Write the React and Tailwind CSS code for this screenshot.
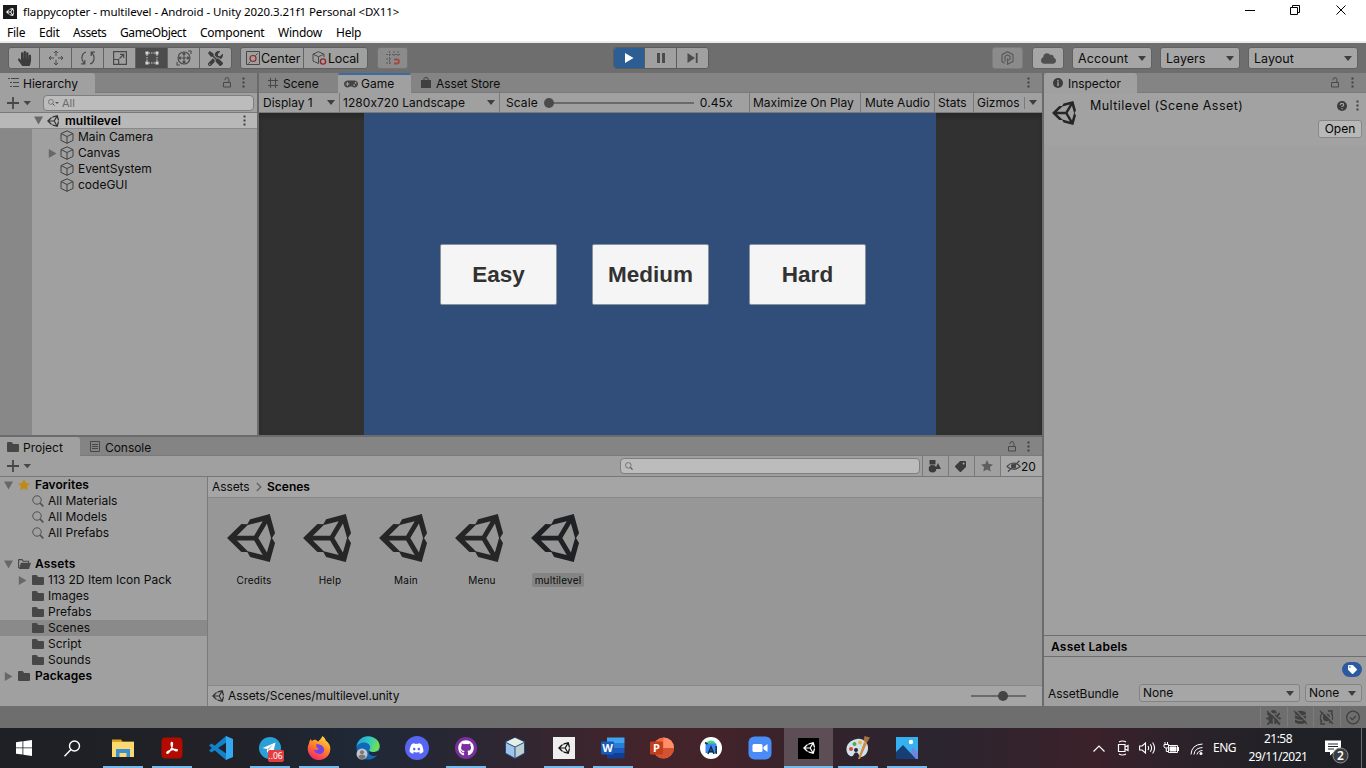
import React from "react";
import { FaHandPaper, FaGithub, FaDiscord, FaTools, FaBug, FaCloud, FaTag, FaGamepad } from "react-icons/fa";

const UNITY =
  "M498.11 206.4 445.31 14.72 248.2 66.08 219 116.14l-59.2-.43L15.54 256l144.28 140.32 59.17-.43 29.24 50 197.08 51.36 52.8-191.62-30-49.63ZM223.77 124.2 374.55 86.51 288 232.33H114.87Zm0 263.63L114.87 279.71H288l86.55 145.81Zm193 14L330.17 256l86.58-145.84L458.56 256Z";

const Unity = ({ className }) => (
  <svg viewBox="15 14 483 483" className={className} fill="currentColor"><path fillRule="evenodd" d={UNITY} /></svg>
);
const Tri = ({ className = "" }) => (
  <svg viewBox="0 0 8 5" className={"h-[5px] w-[8px] shrink-0 " + className} fill="#3f3f3f"><path d="M0 0h8L4 5z" /></svg>
);
const Fold = ({ open, className = "" }) => (
  <svg viewBox="0 0 9 9" className={"size-[9px] shrink-0 " + className} fill="#686868">
    <path d={open ? "M0 .5h9L4.5 8.5z" : "M.8 0v9L8.5 4.5z"} />
  </svg>
);
const Dots = ({ className = "" }) => (
  <svg viewBox="0 0 3 11" className={"h-[11px] w-[3px] shrink-0 " + className} fill="#404040">
    <path d="M.5.5h2v2h-2zM.5 4.5h2v2h-2zM.5 8.5h2v2h-2z" />
  </svg>
);
const Lock = ({ className = "" }) => (
  <svg viewBox="0 0 10 11" className={"h-[11px] w-[10px] shrink-0 " + className} fill="none" stroke="#484848">
    <path d="M1.5 5.5h7v4.5h-7zM3 3.2V2.6A1.9 1.9 0 0 1 6.9 2.6V5.5" />
  </svg>
);
const Cube = ({ className = "size-[14px]" }) => (
  <svg viewBox="0 0 14 14" className={"shrink-0 " + className} fill="none" stroke="#404040" strokeLinejoin="round">
    <path d="M7 .8 13 3.6v6.8L7 13.3 1 10.4V3.6zM1 3.6l6 2.9 6-2.9M7 6.5v6.8" />
  </svg>
);
const Folder = ({ className = "" }) => (
  <svg viewBox="0 0 12 10" className={"h-[10px] w-[12px] shrink-0 " + className} fill="#474747">
    <path d="M0 1Q0 0 1 0h3.2q.6 0 1 .6L6 1.9h5q1 0 1 1V9q0 1-1 1H1Q0 10 0 9z" />
  </svg>
);
const FolderOpen = () => (
  <svg viewBox="0 0 13 10" className="h-[10px] w-[13px] shrink-0">
    <path d="M.6 9V1Q.6.6 1 .6h3l1.2 1.6h5.3v1.6" fill="none" stroke="#474747" strokeWidth="1.1" />
    <path d="M3 3.8h10L11 10H.8z" fill="#474747" />
  </svg>
);
const Star = ({ className }) => (
  <svg viewBox="0 0 12 12" className={"shrink-0 " + className} fill="currentColor">
    <path d="m6 0 1.8 3.9 4.2.5-3.1 2.9.8 4.3L6 9.5l-3.7 2.1.8-4.3L0 4.4l4.2-.5z" />
  </svg>
);
const Lens = ({ className = "size-[12px]", stroke = "#505050" }) => (
  <svg viewBox="0 0 12 12" className={"shrink-0 " + className} fill="none" stroke={stroke}>
    <circle cx="5" cy="5" r="4.2" /><path d="m8 8 3.3 3.3" strokeWidth="1.7" />
  </svg>
);
const Plus = () => (
  <svg viewBox="0 0 24 12" className="h-[12px] w-[24px]">
    <path d="M6 0v12M0 6h12" stroke="#474747" strokeWidth="1.8" /><path d="M16.500 4h7.500l-3.700 4.300z" fill="#474747" />
  </svg>
);

const Tab = ({ children, className = "" }) => (
  <div className={"flex items-center bg-[#a0a0a0] " + className}>{children}</div>
);
const Select = ({ label, className = "" }) => (
  <div className={"flex items-center justify-between rounded-[3px] border bg-[#a6a6a6] " + className}>
    <span>{label}</span><Tri />
  </div>
);

function TitleBar() {
  return (
    <div className="h-[43px] border-b-2 border-[#ececec] bg-white font-['Noto_Sans','Segoe_UI',sans-serif] text-black">
      <div className="flex h-[23px] items-center">
        <div className="ml-[3px] flex size-[14px] items-center justify-center bg-[#1a1a1a] text-white"><Unity className="size-[8px]" /></div>
        <span className="ml-[6px] text-[11.5px] tracking-[-0.07px]">flappycopter - multilevel - Android - Unity 2020.3.21f1 Personal &lt;DX11&gt;</span>
        <svg viewBox="0 0 102 12" className="mr-[19px] mb-[3px] ml-auto h-[12px] w-[102px]" fill="none" stroke="#000">
          <path d="M0 6.500h10M45.500 3.500h7v7h-7zM47.500 3.500v-2h7v7h-2M91.500 1.500l9 9M100.500 1.500l-9 9" />
        </svg>
      </div>
      <div className="flex h-[19px] items-center pl-[7px] text-[12px] tracking-[-0.250px]">
        <span className="w-[32px]">File</span><span className="w-[34px]">Edit</span><span className="w-[47px] tracking-[-0.450px]">Assets</span>
        <span className="w-[80px] tracking-[-0.400px]">GameObject</span><span className="w-[78px]">Component</span><span className="w-[58px]">Window</span><span>Help</span>
      </div>
    </div>
  );
}

function Toolbar() {
  const base = "flex h-full shrink-0 items-center justify-center border-r border-[#646464] ";
  const cell = base + "w-[32px] text-[#4a4a4a]";
  return (
    <div className="flex h-[30px] items-center bg-[#6e6e6e] text-[12.500px]">
      <div className="ml-[8px] flex h-[22px] w-[224px] overflow-hidden rounded-[3px] border border-[#606060] bg-[#a0a0a0]">
        <div className={base + "w-[31px] text-[#3c3c3c]"}><FaHandPaper className="size-[15px]" /></div>
        <div className={cell}>
          <svg viewBox="0 0 16 16" className="size-[16px]" fill="none" stroke="currentColor">
            <path d="M8 1v5M8 10v5M1 8h5M10 8h5M6 3l2-2 2 2M6 13l2 2 2-2M3 6 1 8l2 2M13 6l2 2-2 2" />
          </svg>
        </div>
        <div className={cell}>
          <svg viewBox="0 0 16 16" className="size-[16px]" fill="none" stroke="currentColor" strokeWidth="1.200">
            <path d="M6 2C2 3 0 9 4.500 13.500M10 14c4-1 6-7 1.500-11.500M4.800 10v3.800H1M11.200 6V2.200H15" />
          </svg>
        </div>
        <div className={cell}>
          <svg viewBox="0 0 14 14" className="size-[14px]" fill="none" stroke="currentColor" strokeWidth="1.200">
            <path d="M.6.6h12.800v12.800H.6zM.6 8.500h5v5M6.500 7.500l4-4M7 3.300h3.700V7" />
          </svg>
        </div>
        <div className={base + "w-[32px] bg-[#4c4c4c]"}>
          <svg viewBox="0 0 14 14" className="size-[14px]" stroke="#d8d8d8">
            <path d="M3.500 2h7M3.500 12h7M2 3.500v7M12 3.500v7" strokeWidth=".9" strokeDasharray="1.500 1" /><path d="M.5.500h3v3h-3zM10.500.500h3v3h-3zM.5 10.500h3v3h-3zM10.500 10.500h3v3h-3z" fill="#d8d8d8" stroke="none" />
          </svg>
        </div>
        <div className={cell}>
          <svg viewBox="0 0 16 16" className="size-[16px]" fill="none" stroke="currentColor" strokeWidth="1.100">
            <circle cx="8" cy="8" r="6" /><path d="M8 3v10M3 8h10M6.500 4.500 8 3l1.500 1.500M6.500 11.500 8 13l1.500-1.500M4.500 6.500 3 8l1.500 1.500M11.500 6.500 13 8l-1.500 1.500M12 1h3v3M1 12v3h3" />
          </svg>
        </div>
        <div className="flex flex-1 items-center justify-center text-[#3c3c3c]"><FaTools className="size-[15px]" /></div>
      </div>
      <div className="ml-[8px] flex h-[22px] w-[128px] rounded-[3px] border border-[#606060] bg-[#a0a0a0]">
        <div className="flex w-[63px] shrink-0 items-center border-r border-[#646464] pl-[5px]">
          <svg viewBox="0 0 14 14" className="size-[14px] shrink-0" fill="none" stroke="#484848">
            <path d="M.5.5h13v13H.5z" /><circle cx="7" cy="7.500" r="3" stroke="#8f2a2a" strokeWidth="1.200" /><path d="m4.500 10.500-2 2M9.500 4.500l2-2" />
          </svg>
          <span className="ml-[1px] pt-[1px] tracking-[-0.050px]">Center</span>
        </div>
        <div className="flex items-center pl-[8px]">
          <svg viewBox="0 0 16 14" className="h-[14px] w-[16px]" fill="none" stroke="#484848">
            <path d="M6.500.7 12 3.200v3M6.500 12.500 1 10V3.200L6.500.7M1 3.200l5.500 2.500L12 3.200M6.500 5.700v6.800" /><circle cx="11" cy="10.500" r="2.600" stroke="#8f2a2a" strokeWidth="1.400" />
          </svg>
          <span className="pt-[1px] tracking-[-0.200px]">Local</span>
        </div>
      </div>
      <div className="ml-[9px] flex h-[22px] w-[31px] items-center justify-center rounded-[3px] border border-[#747474] bg-[#8b8b8b]">
        <svg viewBox="0 0 14 14" className="size-[14px]" fill="none" stroke="#5c5c5c">
          <path d="M3.500 0v13M8 0v6M12 0v6M0 3.500h14M0 8h6M0 12h6" strokeDasharray="2 1" /><path d="M8 8.500h3a1.800 1.800 0 0 1 0 4H8" stroke="#9c4b4b" strokeWidth="1.800" />
        </svg>
      </div>
      <div className="ml-[205px] flex h-[22px] w-[96px] overflow-hidden rounded-[3px] border border-[#5c5c5c] bg-[#a0a0a0]">
        <div className="flex w-[31px] items-center justify-center border-r border-[#5c5c5c] bg-[#2c5d93]"><svg viewBox="0 0 10 10" className="size-[10px]" fill="#fff"><path d="M1 0v10l8.500-5z" /></svg></div>
        <div className="flex w-[32px] items-center justify-center border-r border-[#5c5c5c]"><svg viewBox="0 0 10 10" className="size-[10px]" fill="#4b4b4b"><path d="M1 0h3v10H1zM6 0h3v10H6z" /></svg></div>
        <div className="flex flex-1 items-center justify-center"><svg viewBox="0 0 11 10" className="h-[10px] w-[11px]" fill="#4b4b4b"><path d="M.5 0v10l7.500-5zM8.800 0h1.800v10H8.800z" /></svg></div>
      </div>
      <div className="ml-[283px] flex h-[22px] w-[31px] items-center justify-center rounded-[3px] border border-[#7c7c7c] bg-[#8b8b8b]">
        <svg viewBox="0 0 13 14" className="h-[14px] w-[13px]" fill="none" stroke="#5a5a5a" strokeWidth="1.200">
          <path d="M3.500 12.300 1 10.600V3.700L6.500.8 12 3.700v6.600L6.500 13.300V7.500M4 10.500V5.300L6.500 4 9 5.300v2.900L6.500 9.500" />
        </svg>
      </div>
      <div className="ml-[9px] flex h-[22px] w-[32px] items-center justify-center rounded-[3px] border border-[#626262] bg-[#a6a6a6]"><FaCloud className="size-[15px] text-[#4f4f4f]" /></div>
      <Select label="Account" className="ml-[8px] h-[22px] w-[80px] border-[#626262] px-[5px] pt-px tracking-[0.150px]" />
      <Select label="Layers" className="ml-[8px] h-[22px] w-[80px] border-[#626262] px-[5px] pt-px tracking-[0.020px]" />
      <Select label="Layout" className="ml-[8px] h-[22px] w-[110px] border-[#626262] px-[5px] pt-px tracking-[0.020px]" />
    </div>
  );
}

const HItem = ({ name, fold }) => (
  <div className="flex h-[16px] items-center pl-[16px]">
    <span className="w-[12px]">{fold && <Fold />}</span><Cube /><span className="ml-[4px]">{name}</span>
  </div>
);

function Hierarchy() {
  return (
    <div className="flex w-[257px] flex-col bg-[#a0a0a0]">
      <div className="flex h-[20px] items-center border-b border-[#7a7a7a] bg-[#848484]">
        <Tab className="h-[20px] w-[95px] rounded-tr-[3px] pl-[8px]">
          <svg viewBox="0 0 11 9" className="h-[9px] w-[11px]" stroke="#474747"><path d="M0 .5h2M3 .5h8M2 4.500h2M5 4.500h6M2 8.500h2M5 8.500h6" /></svg>
          <span className="ml-[4px] pt-[2px]">Hierarchy</span>
        </Tab>
        <Lock className="ml-auto" /><Dots className="mr-[12px] ml-[10px]" />
      </div>
      <div className="flex h-[20px] items-center border-b border-[#7a7a7a] pl-[7px]">
        <Plus />
        <div className="ml-[12px] flex h-[16px] w-[211px] items-center rounded-[4px] border border-[#7e7e7e] bg-[#bcbcbc] pl-[4px] text-[#6a6a6a]">
          <Lens className="size-[7px]" /><svg viewBox="0 0 4 2" className="h-[2px] w-[4px]"><path d="M0 0h4L2 2z" fill="#555" /></svg>
          <span className="ml-[3px] text-[11px]">All</span>
        </div>
      </div>
      <div className="flex h-[16px] items-center border-b border-[#8a8a8a] bg-[#b8b8b8] pl-[34px] font-semibold text-black">
        <Fold open /><Unity className="ml-[4px] size-[12px] text-[#333]" /><span className="ml-[6px]">multilevel</span><Dots className="mr-[11px] ml-auto" />
      </div>
      <div className="flex flex-1">
        <div className="w-[32px] bg-[#888]" />
        <div className="flex-1"><HItem name="Main Camera" /><HItem name="Canvas" fold /><HItem name="EventSystem" /><HItem name="codeGUI" /></div>
      </div>
    </div>
  );
}

function Game() {
  const btn = "flex h-[61px] w-[117px] items-center justify-center rounded-[2px] border border-[#8a929e] bg-[#f5f5f5] pt-[1px] pl-px";
  const c = "flex h-full items-center border-r border-[#7a7a7a]";
  return (
    <div className="ml-[2px] flex w-[783px] flex-col bg-[#a0a0a0]">
      <div className="flex h-[20px] items-center border-b border-[#7a7a7a] bg-[#848484]">
        <div className="flex w-[79px] items-center pl-[9px]">
          <svg viewBox="0 0 10 10" className="size-[10px]" stroke="#474747"><path d="M2.500 0v10M7.500 0v10M0 2.500h10M0 7.500h10" /></svg>
          <span className="ml-[5px] pt-[2px]">Scene</span>
        </div>
        <Tab className="h-[20px] w-[73px] rounded-t-[2px] border-t-2 border-[#3b6ba5] pl-[6px]">
          <FaGamepad className="size-[14px] text-[#444]" /><span className="ml-[3px]">Game</span>
        </Tab>
        <svg viewBox="0 0 10 11" className="ml-[10px] h-[11px] w-[10px]"><path d="M0 3h10v8H0z" fill="#404040" /><path d="M3 4V1.500Q3 .6 5 .6t2 .9V4" fill="none" stroke="#404040" /></svg>
        <span className="ml-[5px] pt-[2px] tracking-[-0.100px]">Asset Store</span>
        <Dots className="mr-[12px] ml-auto" />
      </div>
      <div className="flex h-[20px] items-center border-b border-[#7a7a7a]">
        <div className={c + " w-[81px] justify-between pr-[4px] pl-[4px]"}><span>Display 1</span><Tri /></div>
        <div className={c + " w-[160px] justify-between pr-[4px] pl-[3px]"}><span className="tracking-[0.050px]">1280x720 Landscape</span><Tri /></div>
        <div className={c + " w-[250px] pl-[6px]"}>
          <span className="tracking-[0.100px]">Scale</span>
          <svg viewBox="0 0 150 10" className="ml-[6px] h-[10px] w-[150px]"><path d="M5 5h145" stroke="#6a6a6a" strokeWidth="2" /><circle cx="5" cy="5" r="5" fill="#4b4b4b" /></svg>
          <span className="ml-[6px] tracking-[0.100px]">0.45x</span>
        </div>
        <div className={c + " w-[111px] pl-[3px]"}>Maximize On Play</div>
        <div className={c + " w-[74px] pl-[4px]"}>Mute Audio</div>
        <div className={c + " w-[39px] pl-[3px]"}>Stats</div>
        <span className="pl-[3px]">Gizmos</span>
        <div className="ml-auto flex h-[12px] items-center border-l border-[#7a7a7a] pr-[5px] pl-[4px]"><Tri /></div>
      </div>
      <div className="flex flex-1 justify-center bg-[#313131] pr-[1px] shadow-[inset_0_4px_4px_rgba(0,0,0,0.2)]">
        <div className="flex w-[572px] items-start bg-[#314d79] pt-[130.500px] pl-[75.500px] font-['Liberation_Sans',Arial,sans-serif] text-[22.500px] font-bold text-[#323232]">
          <div className={btn}>Easy</div><div className={btn + " ml-[35px]"}>Medium</div><div className={btn + " ml-[40px]"}>Hard</div>
        </div>
      </div>
    </div>
  );
}

const TreeItem = ({ name, fold, selected }) => (
  <div className={"flex h-[16px] items-center pl-[18px] " + (selected ? "bg-[#8a8a8a]" : "")}>
    <span className="w-[14px]">{fold && <Fold />}</span><Folder /><span className="ml-[4px]">{name}</span>
  </div>
);
const SearchItem = ({ name }) => (
  <div className="flex h-[16px] items-center pl-[32px]"><Lens /><span className="ml-[4px]">{name}</span></div>
);
const SceneAsset = ({ name, selected }) => (
  <div className={"flex w-[76px] flex-col items-center " + (selected ? "text-[#1f2124]" : "text-[#262626]")}>
    <Unity className="size-[48px]" />
    <div className="pl-[6px]">
      <span className={"mt-[11px] flex h-[14px] items-center rounded-[2px] px-[3px] text-[10px] tracking-[0.200px] text-[#0a0a0a] " + (selected ? "bg-[#848484]" : "")}>{name}</span>
    </div>
  </div>
);

function Project() {
  const b = "flex h-full w-[26px] items-center justify-center border-l border-[#7a7a7a] pr-[2px]";
  return (
    <div className="flex h-[269px] w-[1042px] flex-col bg-[#a0a0a0]">
      <div className="flex h-[19px] shrink-0 items-center border-b border-[#7a7a7a] bg-[#848484]">
        <Tab className="h-[19px] w-[80px] rounded-tr-[3px] pl-[7px]"><Folder className="mt-px" /><span className="ml-[4px] pt-[3px]">Project</span></Tab>
        <svg viewBox="0 0 10 11" className="ml-[10px] h-[11px] w-[10px]" fill="none" stroke="#474747"><path d="M.5.5h9v10h-9zM2 3.500h6M2 5.500h6M2 7.500h6" /></svg>
        <span className="ml-[5px] pt-[3px] tracking-[-0.050px]">Console</span>
        <Lock className="mt-px ml-auto" /><Dots className="mt-px mr-[12px] ml-[10px]" />
      </div>
      <div className="flex h-[21px] shrink-0 items-center border-b border-[#777] pl-[7px]">
        <Plus />
        <div className="mr-[2px] ml-auto flex h-[16px] w-[300px] items-center rounded-[4px] border border-[#7e7e7e] bg-[#bcbcbc] pl-[4px]"><Lens className="size-[8px]" /></div>
        <div className={b}><svg viewBox="0 0 13 13" className="size-[13px]" fill="#3c3c3c"><path d="M1.500 0h6v4.500h-6zM10 3l3 6H8V7z" /><circle cx="4.500" cy="8.700" r="3.800" /></svg></div>
        <div className={b}><FaTag className="size-[11px] -scale-x-100 text-[#3c3c3c]" /></div>
        <div className={b}><Star className="size-[12px] text-[#5f5f5f]" /></div>
        <div className="flex h-full w-[42px] items-center border-l border-[#7a7a7a] bg-[#a8a8a8] pl-[5px]">
          <svg viewBox="0 0 15 12" className="h-[12px] w-[15px]" fill="none" stroke="#444" strokeWidth="1.200"><path d="M.8 6.500Q7.500-.5 14.200 6.500 7.500 12 .8 6.500M2 11.500 13.500.8" /><circle cx="7.500" cy="6" r="2" fill="#444" /></svg>
          <span className="pt-px">20</span>
        </div>
      </div>
      <div className="flex flex-1">
        <div className="w-[208px] border-r border-[#7a7a7a]">
          <div className="flex h-[16px] items-center pl-[4px] font-semibold text-black"><Fold open /><Star className="ml-[5px] size-[12px] text-[#c08a10]" /><span className="ml-[5px] tracking-[0.050px]">Favorites</span></div>
          <SearchItem name="All Materials" /><SearchItem name="All Models" /><SearchItem name="All Prefabs" />
          <div className="mt-[15px] flex h-[16px] items-center pl-[4px] font-semibold text-black"><Fold open /><span className="ml-[5px]"><FolderOpen /></span><span className="ml-[4px] tracking-[0.150px]">Assets</span></div>
          <TreeItem name="113 2D Item Icon Pack" fold /><TreeItem name="Images" /><TreeItem name="Prefabs" /><TreeItem name="Scenes" selected /><TreeItem name="Script" /><TreeItem name="Sounds" />
          <div className="flex h-[16px] items-center pl-[4px] font-semibold text-black"><Fold /><Folder className="ml-[5px]" /><span className="ml-[5px] tracking-[0.100px]">Packages</span></div>
        </div>
        <div className="flex flex-1 flex-col">
          <div className="flex h-[21px] items-center border-b border-[#888] bg-[#a5a5a5] pl-[4px]">
            <span className="w-[44px] tracking-[-0.100px]">Assets</span>
            <svg viewBox="0 0 6 10" className="mr-[5px] h-[10px] w-[6px]" fill="none" stroke="#5c5c5c" strokeWidth="1.200"><path d="m.8 1 4 4-4 4" /></svg>
            <span className="font-semibold text-black">Scenes</span>
          </div>
          <div className="flex flex-1 bg-[#979797] pt-[16px] pl-[5px]">
            <SceneAsset name="Credits" /><SceneAsset name="Help" /><SceneAsset name="Main" /><SceneAsset name="Menu" /><SceneAsset name="multilevel" selected />
          </div>
          <div className="flex h-[21px] items-center border-t border-[#888] bg-[#a5a5a5] pl-[4px]">
            <Unity className="size-[12px] text-[#333]" /><span className="ml-[4px] tracking-[-0.080px]">Assets/Scenes/multilevel.unity</span>
            <svg viewBox="0 0 55 10" className="mr-[16px] ml-auto h-[10px] w-[55px]"><path d="M0 5h55" stroke="#6a6a6a" strokeWidth="2" /><circle cx="32" cy="5" r="5" fill="#444" /></svg>
          </div>
        </div>
      </div>
    </div>
  );
}

function Inspector() {
  return (
    <div className="ml-[2px] flex w-[322px] flex-col bg-[#a0a0a0]">
      <div className="flex h-[20px] items-center border-b border-[#7a7a7a] bg-[#848484]">
        <Tab className="h-[20px] w-[93px] rounded-t-[3px] pl-[9px]">
          <svg viewBox="0 0 10 10" className="size-[10px]"><circle cx="5" cy="5" r="5" fill="#3c3c3c" /><path d="M5 2v1.400M5 4.300V8" stroke="#a0a0a0" strokeWidth="1.500" /></svg>
          <span className="ml-[5px] pt-[2px] tracking-[-0.050px]">Inspector</span>
        </Tab>
        <Lock className="ml-auto" /><Dots className="mr-[12px] ml-[11px]" />
      </div>
      <div className="flex h-[52px] justify-between bg-[#a2a2a2] pl-[8px]">
        <Unity className="mt-[8px] size-[24px] text-[#262626]" />
        <span className="mt-[5px] ml-[14px] flex-1 text-[12.500px] tracking-[0.440px]">Multilevel (Scene Asset)</span>
        <div className="flex flex-col items-end">
          <div className="mt-[7px] mr-[7px] flex items-center">
            <svg viewBox="0 0 10 10" className="mr-[9px] size-[10px]"><circle cx="5" cy="5" r="5" fill="#3c3c3c" /><path d="M3.300 4q0-1.700 1.700-1.700T6.700 3.900Q6.700 4.800 5 5.500v.6M5 7v1.300" fill="none" stroke="#a0a0a0" strokeWidth="1.200" /></svg>
            <Dots />
          </div>
          <div className="mt-[9px] mr-[4px] flex h-[18px] w-[44px] items-center justify-center rounded-[3px] border border-[#888] bg-[#b8b8b8] text-black">Open</div>
        </div>
      </div>
      <div className="flex-1" />
      <div className="flex h-[22px] items-center border-y border-[#6e6e6e] pt-[2px] pl-[7px] font-semibold tracking-[0.200px] text-black">Asset Labels</div>
      <div className="flex h-[27px] justify-end pt-[5px] pr-[4px]">
        <div className="flex h-[15px] w-[20px] items-center justify-center rounded-full bg-[#2c5aa0]"><FaTag className="size-[9px] text-white" /></div>
      </div>
      <div className="flex h-[22px] items-start pl-[4px]">
        <span className="mt-[2px] w-[91px] tracking-[-0.050px]">AssetBundle</span>
        <Select label="None" className="h-[18px] w-[161px] border-[#838383] pr-[5px] pl-[3px]" />
        <Select label="None" className="ml-[5px] h-[18px] w-[57px] border-[#838383] pr-[5px] pl-[3px]" />
      </div>
    </div>
  );
}

function StatusBar() {
  const c = "flex h-[20px] w-[26.500px] items-center justify-center border-l border-[#7c7c7c] text-[#404040]";
  const slash = <><path d="m2.500 0 12.500 12.500" stroke="#6e6e6e" strokeWidth="1.300" /><path d="m1 1 13 13" stroke="#404040" strokeWidth="1.300" /></>;
  return (
    <div className="flex h-[22px] items-center justify-end bg-[#6e6e6e]">
      <div className={c}>
        <svg viewBox="0 0 15 15" className="size-[15px]"><FaBug size={15} />{slash}</svg>
      </div>
      <div className={c}>
        <svg viewBox="0 0 15 15" className="size-[15px]" fill="#404040"><ellipse cx="7.500" cy="3.200" rx="5.500" ry="2.500" /><path d="M2 5.200q5.500 3 11 0v3q-5.500 3-11 0zM2 9.500q5.500 3 11 0v3q-5.500 3-11 0z" />{slash}</svg>
      </div>
      <div className={c}>
        <svg viewBox="0 0 15 15" className="size-[15px]" fill="none" stroke="#404040" strokeWidth="1.300"><path d="M3 12A6.300 6.300 0 0 1 5 2M12 3a6.300 6.300 0 0 1-2 10M9 1h4v4M6 14H2v-4" /><circle cx="7.500" cy="7.500" r="3" fill="#404040" />{slash}</svg>
      </div>
      <div className={c}>
        <svg viewBox="0 0 15 15" className="size-[15px]" fill="none" stroke="#404040" strokeWidth="1.300"><circle cx="7" cy="7.500" r="6.300" /><path d="m4 7.500 2.300 2.200L10 6" /></svg>
      </div>
    </div>
  );
}

const AppCell = ({ children, open, active }) => (
  <div className={"flex h-full w-[49px] shrink-0 flex-col items-center " + (active ? "bg-[#5d4d54]" : "")}>
    <div className="flex h-[38px] items-center pt-[2px]">{children}</div>
    {(open || active) && <div className={"h-[2px] bg-[#76b9ed] " + (active ? "w-full" : "w-[40px]")} />}
  </div>
);
const I = ({ children, s = "size-[24px]" }) => <svg viewBox="0 0 24 24" className={s}>{children}</svg>;

function Taskbar() {
  return (
    <div className="flex h-[40px] items-stretch bg-[linear-gradient(90deg,#1e2026_0%,#212127_17%,#1f2837_26%,#2b2733_35%,#43242b_47%,#42232a_53%,#30232c_62%,#2b252f_69%,#3b212a_80%,#2b222a_87%,#202126_94%,#1e2025_100%)] font-['Noto_Sans','Segoe_UI',sans-serif] text-white">
      <div className="flex w-[48px] items-center justify-center">
        <svg viewBox="0 0 16 16" className="size-[16px]" fill="#fff"><path d="m0 2.200 6.500-.9v6.200H0zM7.300 1.200 16 0v7.500H7.300zM0 8.300h6.500v6.300L0 13.700zM7.300 8.300H16V16l-8.700-1.200z" /></svg>
      </div>
      <div className="flex w-[50px] items-center justify-center pr-[2px]">
        <svg viewBox="0 0 17 17" className="size-[17px]" fill="none" stroke="#fff" strokeWidth="1.400"><circle cx="10.500" cy="6" r="5" /><path d="m7 9.500-6.500 6.800" /></svg>
      </div>
      <AppCell open><I><path d="M1 3.500h9l1.500 2H23V20H1z" fill="#d9a21b" /><path d="M1 6h22v15H1z" fill="#fbd872" /><path d="M5 13h14v8h-3.500v-4h-7v4H5z" fill="#3a8fd0" /></I></AppCell>
      <AppCell open><I><rect x="1.500" y="1.500" width="21" height="21" rx="4" fill="#b30b00" /><path d="M11.800 6.500c1.200 0 .8 3.500-.6 6.400-1.400 2.800-3.200 4.800-4.200 4.300-1-.6 1.300-2.500 4.700-3.400 3.200-.8 5.700-.6 5.600.5-.2 1.200-3.200.1-4.700-1.800-1.600-1.900-2-6-.8-6z" fill="none" stroke="#fff" strokeWidth="1.300" /></I></AppCell>
      <AppCell><I><path d="M17 0v24L0 9.500l2.500-2L18 18V6L2.500 16.500l-2.500-2z" fill="#1482ca" /><path d="m17 0 7 3v18l-7 3z" fill="#33a9f2" /></I></AppCell>
      <AppCell open>
        <div className="relative"><I><circle cx="12" cy="12" r="11" fill="#2b9fd8" /><path d="m4.500 12 13-5.500L15 18l-4-3-2 1.800V13z" fill="#fff" /><path d="m9 13 6-4.500-4.500 6z" fill="#a8cfe4" /></I>
          <span className="absolute -right-[2px] -bottom-[2px] flex h-[12px] w-[16px] items-center justify-center rounded-[2px] bg-[#e43d3d] text-[8.500px] leading-none">..06</span></div>
      </AppCell>
      <AppCell open><I>
        <defs><linearGradient id="ff" x1=".8" y1="0" x2=".3" y2="1"><stop offset="0" stopColor="#ffe14a" /><stop offset=".45" stopColor="#ff8a24" /><stop offset="1" stopColor="#f5246a" /></linearGradient></defs>
        <path d="M15.500 0c2 1.500 3 3 3.200 4.500C22 7 23.500 10 23.300 13A11.300 11.300 0 1 1 2 7.500c.2-2 1-3.500 2-4.500.1 1 .5 1.700 1 2C6 4 7.500 3.500 8.500 3.700 9.500 4 10 5 11 5.500 13 4 14.500 2 15.500 0z" fill="url(#ff)" />
        <path d="M9 8.500c2-1 7 .5 8 4 .8 3.500-2 5.500-4.500 5.500S7 16 7 13.500c2 1.500 4 .5 5-1-1.500 0-2.500-.5-3-4z" fill="#7542e5" />
      </I></AppCell>
      <AppCell><I>
        <defs><linearGradient id="ed" x1="0" y1="0" x2="1" y2=".3"><stop offset="0" stopColor="#1ca0e0" /><stop offset=".6" stopColor="#35c8c0" /><stop offset="1" stopColor="#6fe052" /></linearGradient></defs>
        <circle cx="12" cy="12" r="11.500" fill="#1168b8" />
        <path d="M.5 11C1 5 6 .3 12 .3 19 .3 24 5.500 23.700 10.500c-.3 4-3.700 5.500-7 5.500-2 0-3.500-.7-3.500-1.700 0-.8 1-1.300 1-3C14 8 11 6.500 8 6.500S1.500 8 .5 11z" fill="url(#ed)" />
        <path d="M13.200 14.500c0 1 1.500 1.700 3.500 1.700 2.500 0 4.800-.7 7.300-1.700v3l-5 2.500c-4 0-7-1.500-5.800-5.500z" fill="#23273a" />
        <circle cx="6" cy="18" r="5.500" fill="#c4c4c4" /><circle cx="6" cy="16.300" r="2" fill="#777" /><path d="M2.500 21.500q0-3 3.500-3t3.500 3Q6 24.500 2.500 21.500" fill="#777" />
      </I></AppCell>
      <AppCell><div className="flex size-[24px] items-center justify-center rounded-full bg-[#5865f2]"><FaDiscord className="size-[15px]" /></div></AppCell>
      <AppCell open><div className="flex size-[22px] items-center justify-center rounded-full bg-[#7a2f9c]"><FaGithub className="size-[16px]" /></div></AppCell>
      <AppCell><I><path d="M12 1 22 5.500v12L12 23 2 17.500v-12z" fill="#294a73" /><path d="M12 1.800 21 6l-9 4.500L3 6z" fill="#e4efe8" /><path d="M3 7l8.500 4.200v10.500L3 17z" fill="#9cc4ee" /><path d="m21 7-8.500 4.200v10.500L21 17z" fill="#bccfd3" /></I></AppCell>
      <AppCell open><div className="flex size-[22px] items-center justify-center bg-[#eee] text-[#111]"><Unity className="size-[12px]" /></div></AppCell>
      <AppCell open><I><path d="M6 1.500h17.500V7H6z" fill="#41a5ee" /><path d="M6 7h17.500v5H6z" fill="#2b7cd3" /><path d="M6 12h17.500v5H6z" fill="#185abd" /><path d="M6 17h17.500v5.500H6z" fill="#103f91" /><rect x="0" y="5.500" width="13" height="13" rx="1" fill="#185abd" /><text x="6.500" y="16" fontSize="11" fontWeight="bold" textAnchor="middle" fill="#fff">W</text></I></AppCell>
      <AppCell><I><circle cx="13.500" cy="12" r="10.500" fill="#ed6c47" /><path d="M13.500 1.500A10.500 10.500 0 0 1 24 12H13.500z" fill="#ff8f6b" /><path d="M24 12a10.500 10.500 0 0 1-20.500 3l10-3z" fill="#d35230" /><rect x="0" y="5.500" width="13" height="13" rx="1" fill="#c43e1c" /><text x="6.500" y="16" fontSize="11" fontWeight="bold" textAnchor="middle" fill="#fff">P</text></I></AppCell>
      <AppCell><I><circle cx="12" cy="12" r="11" fill="#fff" /><path d="M7.500 8a4.500 3.500 0 0 1 9 0z" fill="#3ddc84" /><path d="M6.500 7.500h11v9.500h-11z" fill="#4285f4" /><path d="m9 18 3-7 3 7M10.300 15.300h3.400M6 6.500l2.500 1.500M17.200 10v8" fill="none" stroke="#073042" strokeWidth="1.500" /></I></AppCell>
      <AppCell><I><rect x=".5" y=".5" width="23" height="23" rx="6" fill="#4a8cf7" /><rect x="4.500" y="8" width="10" height="8" rx="1.500" fill="#fff" /><path d="m15.500 11 4-3v8l-4-3z" fill="#fff" /></I></AppCell>
      <AppCell active><div className="flex size-[21px] items-center justify-center bg-black text-white"><Unity className="size-[12px]" /></div></AppCell>
      <AppCell open><I><path d="M11 3C4 4 0 9 .5 14s4 7 6 6 1-4 4-3.500 2 5 5 4.500c4-1 7-5 6.500-10S17 2 11 3z" fill="#cfe3ee" /><circle cx="5" cy="13" r="2" fill="#d9483b" /><circle cx="8.500" cy="8" r="2" fill="#57a845" /><circle cx="14" cy="6.500" r="2" fill="#e8b63a" /><circle cx="10" cy="14" r="2" fill="#2b252f" /><path d="m12 23 6-17 3 1-7 16z" fill="#d58a3d" /><path d="m17.500 5 1-5 5.500 1.500-3 5z" fill="#a5703f" /></I></AppCell>
      <AppCell open><I><path d="M1 1h22v22H1z" fill="#36b1f0" /><path d="M12 23 18 11l5 6v6z" fill="#6f86dd" /><path d="M1 16 8 9l13 14H1z" fill="#173f75" /><circle cx="16" cy="6" r="2.200" fill="#fff" /></I></AppCell>

      <div className="ml-auto flex items-center text-[12px]">
        <svg viewBox="0 0 12 7" className="mr-[12px] h-[7px] w-[12px]" fill="none" stroke="#fff" strokeWidth="1.200"><path d="m.5 6.500 5.500-5.500 5.500 5.500" /></svg>
        <svg viewBox="0 0 12 16" className="mr-[10px] h-[16px] w-[12px]" fill="none" stroke="#fff" strokeWidth="1.200"><path d="M1.500 4.500h6.500v7h-6.500zM8 7l3-1.500v5L8 9M2 2q3.500-2 7 0M2 14q3.500 2 7 0" /></svg>
        <svg viewBox="0 0 17 14" className="mr-[7px] h-[14px] w-[17px]" fill="none" stroke="#fff" strokeWidth="1.100"><path d="M.6 5h2.500L6.500 2v10L3.100 9H.6zM9 5q1.300 2 0 4M11.300 3.200q2.600 3.800 0 7.600M13.600 1.500q4 5.500 0 11" /></svg>
        <svg viewBox="0 0 16 12" className="mr-[11px] h-[12px] w-[16px]" fill="none" stroke="#fff"><path d="M5.500 3.500h9v7h-9zM15.500 5v4M2 0v2M4.500 0v2M1 2.500h4.500V5Q5 6 3.300 6T1 5zM3.300 6v3.500h2" /><path d="M7 5h6v4H7z" fill="#fff" /></svg>
        <svg viewBox="0 0 13 12" className="mt-[2px] mr-[10px] h-[12px] w-[13px]" fill="none" stroke="#fff"><path d="M1 11.500Q1.500 1.500 12.500 1M4 11.500Q4.500 5 12.500 4.500M7 11.500Q7.500 8 12.500 7.500" /><circle cx="11" cy="10.500" r="1.500" fill="#fff" stroke="none" /></svg>
        <span className="w-[34px] text-[12px] tracking-[-0.500px]">ENG</span>
        <div className="flex w-[62px] flex-col items-center text-[12px] leading-[18px] tracking-[-0.500px]"><span>21:58</span><span className="whitespace-nowrap">29/11/2021</span></div>
        <svg viewBox="0 0 26 26" className="mt-[5px] mr-[11px] ml-[15px] size-[26px]"><path d="M1 2.500h16V14H10l-4 3.500V14H1z" fill="#fff" /><path d="M4 6h10M4 8.500h10M4 11h6" stroke="#26242a" /><circle cx="16.500" cy="17.500" r="7.500" fill="#3b3b40" stroke="#8d8d92" /><text x="16.500" y="22" fontSize="12" fontWeight="600" textAnchor="middle" fill="#fff">2</text></svg>
      </div>
      <div className="mr-[4px] w-px bg-[#6b6b70]" />
    </div>
  );
}

export default function App() {
  return (
    <div className="flex h-[768px] w-[1366px] flex-col overflow-hidden bg-[#6b6b6b] font-['Inter',sans-serif] text-[12px] leading-[16px] whitespace-nowrap text-[#0c0c0c] [font-feature-settings:'calt'_0]">
      <TitleBar />
      <Toolbar />
      <div className="flex h-[633px]">
        <div className="flex w-[1042px] flex-col">
          <div className="flex h-[362px]"><Hierarchy /><Game /></div>
          <div className="h-[2px]" />
          <Project />
        </div>
        <Inspector />
      </div>
      <StatusBar />
      <Taskbar />
    </div>
  );
}
